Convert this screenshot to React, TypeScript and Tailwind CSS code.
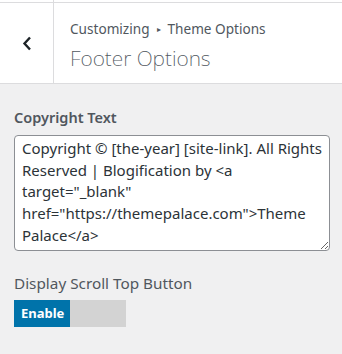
import React from "react";

export default function App() {
  const text =
    'Copyright © [the-year] [site-link]. All Rights\nReserved | Blogification by <a\ntarget="_blank"\nhref="https://themepalace.com">Theme\nPalace</a>';
  return (
    <div
      className="w-[342px] h-[354px] bg-[#f0f0f1] overflow-hidden text-[#50575e]"
      style={{ fontFamily: '"Noto Sans", "Open Sans", sans-serif' }}
    >
      <div className="h-[2px] bg-white flex">
        <div className="w-[54px] border-r border-[#dcdcde]" />
      </div>
      <div className="flex h-[82px] bg-white border-y border-[#dcdcde]">
        <div className="w-[54px] border-r border-[#dcdcde] flex items-center justify-center">
          <svg width="10" height="15" viewBox="0 0 10 15" className="ml-[1px]">
            <polyline
              points="8,1.5 2.5,7.5 8,13.5"
              fill="none"
              stroke="#1d2327"
              strokeWidth="2.4"
            />
          </svg>
        </div>
        <div className="flex flex-col pl-[16px] pt-[16px]">
          <div className="text-[13.6px] leading-[20px] text-[#50575e] flex items-center">
            Customizing
            <span className="text-[8px] mx-[7px]">▸</span>
            Theme Options
          </div>
          <div className="text-[21px] leading-[26px] font-extralight mt-[6px] text-[#50575e]">
            Footer Options
          </div>
        </div>
      </div>
      <div className="px-[14px] pt-[23px]">
        <div className="text-[14.5px] leading-[20px] font-semibold text-[#50575e]">
          Copyright Text
        </div>
        <textarea
          readOnly
          wrap="off"
          value={text}
          className="mt-[8px] block w-[316px] h-[116px] bg-white border border-[#8c8f94] rounded-[4px] px-[7px] pt-[2px] text-[15px] leading-[21.7px] text-[#2c3338] resize-y overflow-hidden outline-none"
          style={{ fontFamily: '"Noto Sans", "Open Sans", sans-serif' }}
        />
        <div className="mt-[22px] text-[15.3px] leading-[20px] text-[#50575e]">
          Display Scroll Top Button
        </div>
        <div className="mt-[7px] flex h-[27px] w-[112px]">
          <div className="w-[56px] bg-[#0073aa] text-white text-[13px] font-bold flex items-center pl-[7px]">
            Enable
          </div>
          <div className="w-[56px] bg-[#d3d3d3]" />
        </div>
      </div>
    </div>
  );
}
